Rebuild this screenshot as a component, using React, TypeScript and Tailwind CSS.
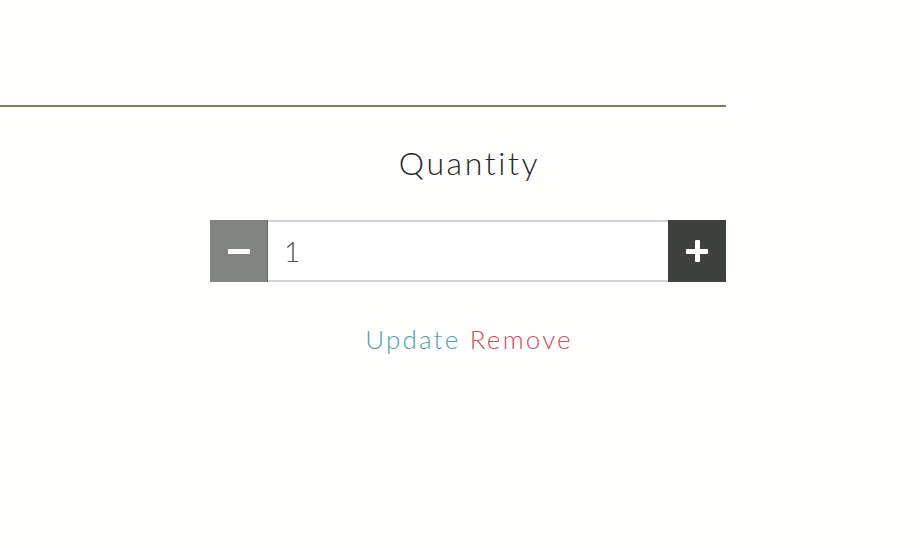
export default function App() {
  return (
    <div className="min-h-screen w-[920px] bg-[#fffffd] font-['Lato',sans-serif]">
      <div className="w-[726px] pt-[105px]">
        <div className="h-[2px] bg-[#857a55]" />
        <div className="ml-[210px] flex flex-col items-center">
          <div className="mt-[36px] pl-[3px] text-[32px] font-light leading-[40px] tracking-[2.6px] text-[#26262b]">
            Quantity
          </div>
          <div className="mt-[37px] flex h-[62px] w-full">
            <button className="flex w-[58px] items-center justify-center border-r border-[#5f635e] bg-[#818580]">
              <span className="block h-[5px] w-[22px] rounded-[1px] bg-white" />
            </button>
            <div className="flex flex-1 items-center border-y-2 border-[#d3d4da] bg-white pl-[16px] text-[28px] font-light text-[#4d4f55]">
              1
            </div>
            <button className="relative flex w-[58px] items-center justify-center bg-[#3d423c]">
              <span className="absolute h-[5px] w-[22px] rounded-[1px] bg-white" />
              <span className="absolute h-[22px] w-[5px] rounded-[1px] bg-white" />
            </button>
          </div>
          <div className="mt-[40px] pl-[2px] text-[26px] font-light leading-[34px] tracking-[2.2px]">
            <span className="text-[#4aa1b6]">Update</span>{" "}
            <span className="text-[#d24c57]">Remove</span>
          </div>
        </div>
      </div>
    </div>
  );
}
